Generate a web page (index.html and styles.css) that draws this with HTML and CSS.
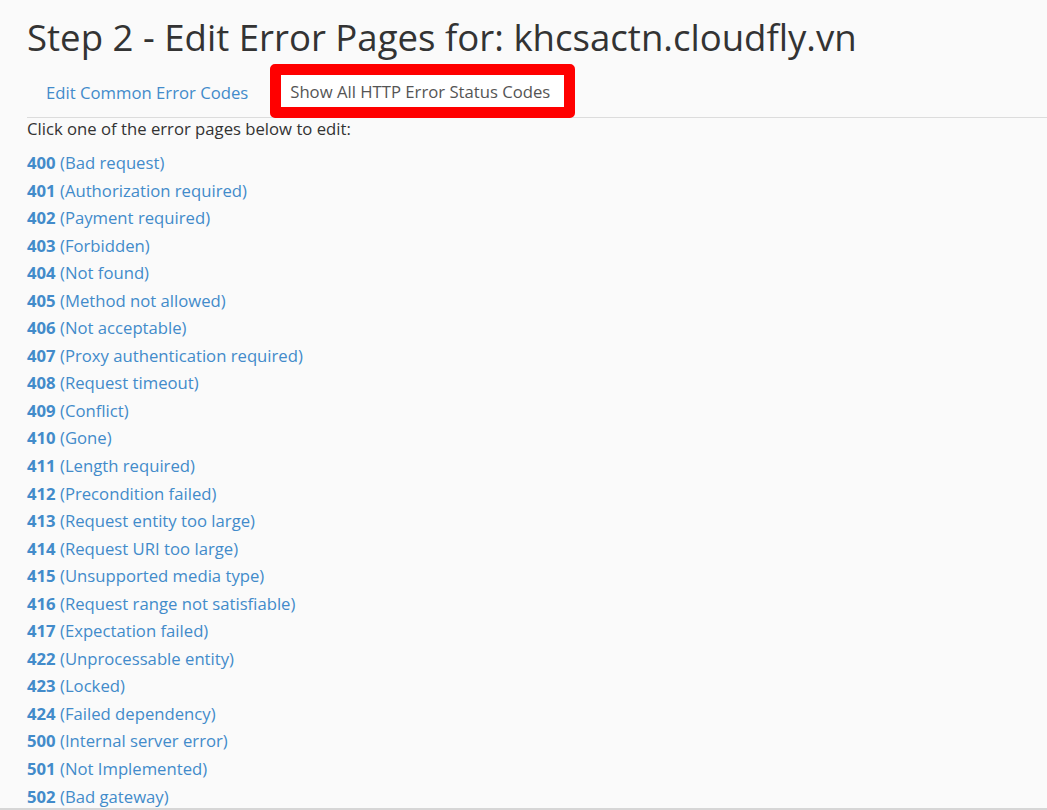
FILE: index.html
```html
<!DOCTYPE html>
<html>
<head>
<meta charset="utf-8">
<link rel="stylesheet" href="styles.css">
</head>
<body>
<div class="page">
  <h1 class="title">Step 2 - Edit Error Pages for: khcsactn.cloudfly.vn</h1>
  <nav class="tabs">
    <a class="tab" href="#">Edit Common Error Codes</a>
    <a class="tab tab-active" href="#">Show All HTTP Error Status Codes</a>
  </nav>
  <p class="intro">Click one of the error pages below to edit:</p>
  <ul class="codes">
    <li><a href="#"><b>400</b> (Bad request)</a></li>
    <li><a href="#"><b>401</b> (Authorization required)</a></li>
    <li><a href="#"><b>402</b> (Payment required)</a></li>
    <li><a href="#"><b>403</b> (Forbidden)</a></li>
    <li><a href="#"><b>404</b> (Not found)</a></li>
    <li><a href="#"><b>405</b> (Method not allowed)</a></li>
    <li><a href="#"><b>406</b> (Not acceptable)</a></li>
    <li><a href="#"><b>407</b> (Proxy authentication required)</a></li>
    <li><a href="#"><b>408</b> (Request timeout)</a></li>
    <li><a href="#"><b>409</b> (Conflict)</a></li>
    <li><a href="#"><b>410</b> (Gone)</a></li>
    <li><a href="#"><b>411</b> (Length required)</a></li>
    <li><a href="#"><b>412</b> (Precondition failed)</a></li>
    <li><a href="#"><b>413</b> (Request entity too large)</a></li>
    <li><a href="#"><b>414</b> (Request URI too large)</a></li>
    <li><a href="#"><b>415</b> (Unsupported media type)</a></li>
    <li><a href="#"><b>416</b> (Request range not satisfiable)</a></li>
    <li><a href="#"><b>417</b> (Expectation failed)</a></li>
    <li><a href="#"><b>422</b> (Unprocessable entity)</a></li>
    <li><a href="#"><b>423</b> (Locked)</a></li>
    <li><a href="#"><b>424</b> (Failed dependency)</a></li>
    <li><a href="#"><b>500</b> (Internal server error)</a></li>
    <li><a href="#"><b>501</b> (Not Implemented)</a></li>
    <li><a href="#"><b>502</b> (Bad gateway)</a></li>
  </ul>
</div>
</body>
</html>
```

FILE: styles.css
```css
html, body {
  margin: 0;
  padding: 0;
  background: #fafafa;
  height: 810px;
  overflow: hidden;
}
body {
  font-family: "Open Sans", "Liberation Sans", sans-serif;
  color: #333;
  font-size: 16.7px;
  border-bottom: 2px solid #d6d6d6;
  box-sizing: border-box;
}
.page {
  padding: 0 0 0 27px;
}
.title {
  margin: 0;
  padding-top: 17px;
  font-size: 36.6px;
  font-weight: 400;
  line-height: 40px;
  color: #333;
}
.tabs {
  display: flex;
  align-items: flex-end;
  margin-top: 8px;
  padding-left: 4px;
  height: 52px;
  border-bottom: 1px solid #dcdcdc;
}
.tab {
  color: #428bca;
  text-decoration: none;
  padding: 13px 15px 9px;
  line-height: 31px;
  font-size: 16.7px;
}
.tab-active {
  margin-left: 7px;
  background: #fff;
  color: #555;
  border: 11px solid #ff0000;
  border-radius: 5px;
  padding: 1px 14px 0 9px;
  position: relative;
  top: 1px;
}
.intro {
  margin: 0;
  line-height: 22px;
}
.codes {
  list-style: none;
  margin: 9px 0 0;
  padding: 0;
}
.codes li {
  line-height: 27.55px;
}
.codes a {
  color: #428bca;
  text-decoration: none;
}
.codes b {
  font-weight: 700;
}
```
